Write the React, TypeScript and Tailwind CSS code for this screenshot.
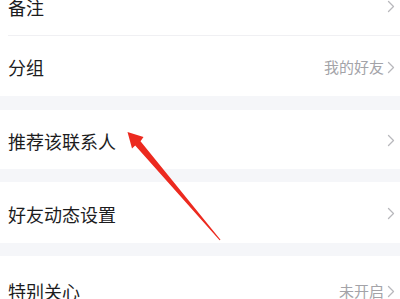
import React from 'react';

type Row = { label: string; value?: string; h: string };

const Chevron: React.FC = () => (
  <svg width="8" height="13" viewBox="0 0 8 13" fill="none" className="ml-[3px] shrink-0">
    <path d="M1.5 1.5L6.5 6.5L1.5 11.5" stroke="#b8b8bc" strokeWidth="1.3" strokeLinecap="round" strokeLinejoin="round" />
  </svg>
);

const ListRow: React.FC<{ row: Row }> = ({ row }) => (
  <div className={`flex items-center justify-between bg-white pl-[8px] pr-[5px] ${row.h}`}>
    <span className="pt-[3px] text-[18px] text-[#1c1c1e]">{row.label}</span>
    <div className="flex items-center pt-[2px]">
      {row.value && <span className="text-[15px] text-[#a3a3a8]">{row.value}</span>}
      <Chevron />
    </div>
  </div>
);

const App: React.FC = () => {
  return (
    <div
      className="relative h-[299px] w-[400px] overflow-hidden bg-[#f5f6f9]"
      style={{ fontFamily: '"Noto Sans CJK SC", "Noto Sans", sans-serif' }}
    >
      <div className="-mt-[24px] flex flex-col">
        <div className="flex flex-col bg-white">
          <ListRow row={{ label: '备注', h: 'h-[59px]' }} />
          <div className="ml-[8px] h-px bg-[#f0f0f3]" />
          <ListRow row={{ label: '分组', value: '我的好友', h: 'h-[60px]' }} />
        </div>
        <div className="h-[14px]" />
        <ListRow row={{ label: '推荐该联系人', h: 'h-[59px]' }} />
        <div className="h-[13px]" />
        <ListRow row={{ label: '好友动态设置', h: 'h-[61px]' }} />
        <div className="h-[13px]" />
        <ListRow row={{ label: '特别关心', value: '未开启', h: 'h-[68px]' }} />
      </div>

      {/* red annotation arrow */}
      <svg className="pointer-events-none absolute left-0 top-0" width="400" height="299" viewBox="0 0 400 299">
        <polygon
          points="127.5,132 143.5,137 140.5,141.2 220.5,239.7 219.6,240.3 135.2,145.6 132,148.5"
          fill="#ec2a1f"
        />
      </svg>
    </div>
  );
};

export default App;
